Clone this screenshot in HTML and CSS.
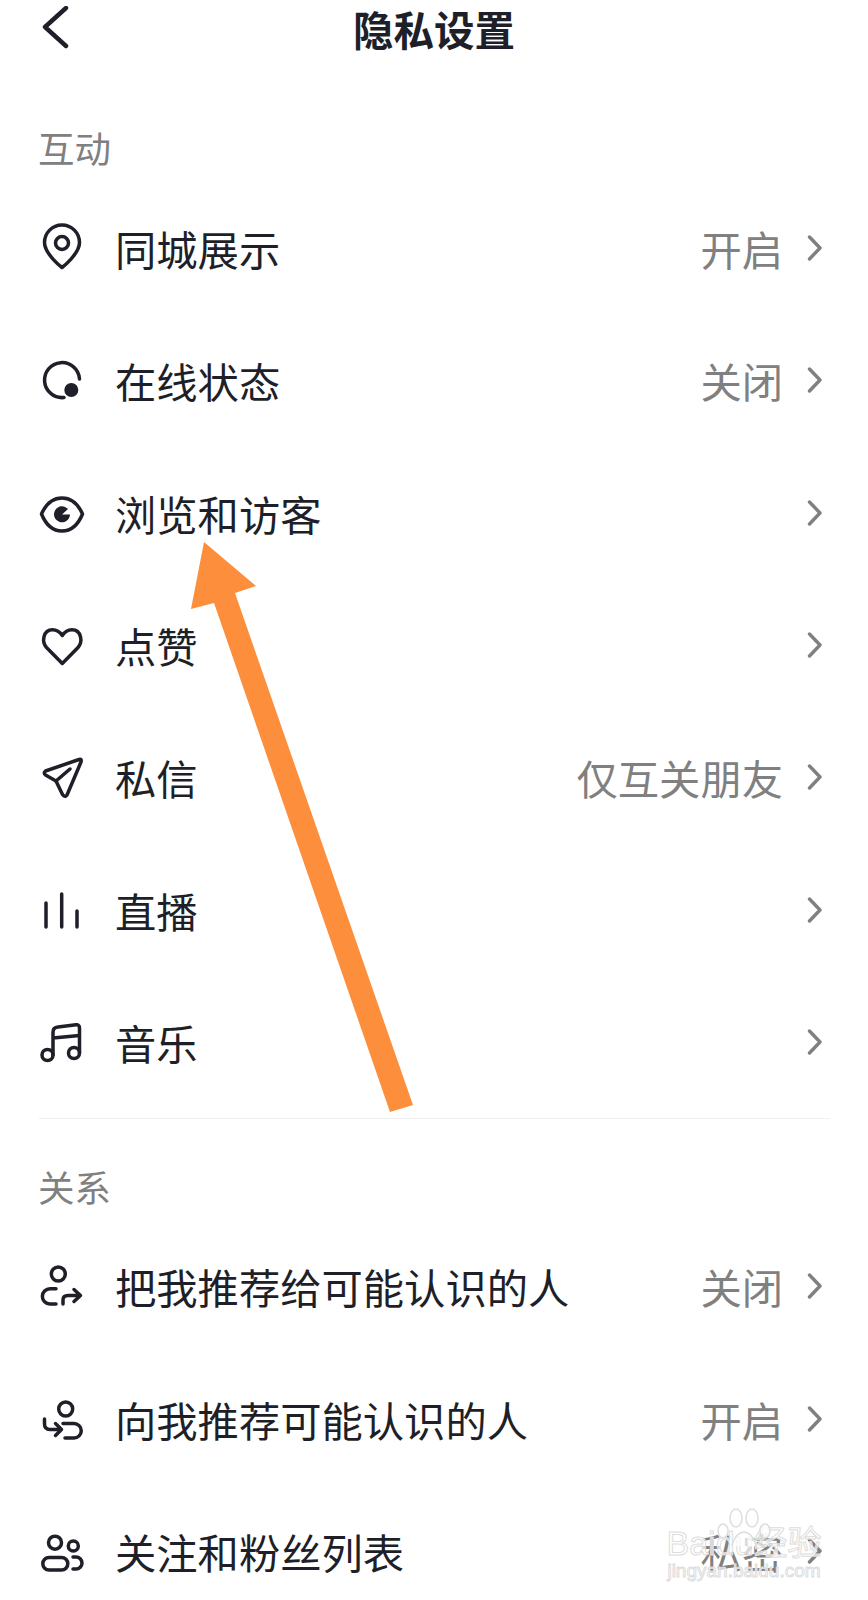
FILE: index.html
```html
<!DOCTYPE html>
<html lang="zh-CN">

<head>
    <meta charset="UTF-8">
    <meta name="viewport" content="width=device-width, initial-scale=1.0">
    <title>隐私设置</title>
    <link rel="stylesheet" href="styles.css">
</head>

<body>
    <div class="page">
        <header class="topbar">
            <svg class="back" viewBox="0 0 28 44"><path d="M25 2 L4 21 L25 40" /></svg>
            <h1>隐私设置</h1>
        </header>

        <section class="group">
            <h2>互动</h2>
            <div class="row">
                <svg class="icon" viewBox="0 0 48 48"><path d="M24 44.5C24 44.5 6.5 31 6.5 19.5a17.5 17.5 0 0 1 35 0C41.5 31 24 44.5 24 44.5Z" /><circle cx="24" cy="20" r="6.5" /></svg>
                <span class="name">同城展示</span>
                <span class="value">开启</span>
                <svg class="more" viewBox="0 0 16 26"><path d="M3.5 2 L14 13 L3.5 24" /></svg>
            </div>
            <div class="row">
                <svg class="icon" viewBox="0 0 48 48"><path d="M41.5 24A17.5 17.5 0 1 0 26 42.5" /><circle class="solid" cx="33.3" cy="35" r="7" /></svg>
                <span class="name">在线状态</span>
                <span class="value">关闭</span>
                <svg class="more" viewBox="0 0 16 26"><path d="M3.5 2 L14 13 L3.5 24" /></svg>
            </div>
            <div class="row">
                <svg class="icon" viewBox="0 0 48 48"><path d="M3.5 26C8 16 15 10 24 10S40 16 44.5 26C40 37 33 43 24 43S8 37 3.5 26Z" /><path class="solid" d="M24 26.5L30 21A8 8 0 1 0 32 26.5Z" /></svg>
                <span class="name">浏览和访客</span>
                <svg class="more" viewBox="0 0 16 26"><path d="M3.5 2 L14 13 L3.5 24" /></svg>
            </div>
            <div class="row">
                <svg class="icon" viewBox="0 0 48 48"><path d="M24.3 43.5L8.5 27.5C3.5 22 5 9.7 14.5 9.7C19 9.7 22 12 24.3 15.5C26.5 12 29.5 9.7 34 9.7C43.5 9.7 45 22 40 27.5Z" /></svg>
                <span class="name">点赞</span>
                <svg class="more" viewBox="0 0 16 26"><path d="M3.5 2 L14 13 L3.5 24" /></svg>
            </div>
            <div class="row">
                <svg class="icon" viewBox="0 0 48 48"><path d="M41 7.5L7.5 19Q5 21 7.5 23L18 29L24.5 42.5Q27 46 29 43L43 10Q44 6.5 41 7.5Z" /><path d="M18 29L32 17" /></svg>
                <span class="name">私信</span>
                <span class="value">仅互关朋友</span>
                <svg class="more" viewBox="0 0 16 26"><path d="M3.5 2 L14 13 L3.5 24" /></svg>
            </div>
            <div class="row">
                <svg class="icon" viewBox="0 0 48 48"><path d="M8 18V42M23.7 9V42M39 26V42" /></svg>
                <span class="name">直播</span>
                <svg class="more" viewBox="0 0 16 26"><path d="M3.5 2 L14 13 L3.5 24" /></svg>
            </div>
            <div class="row">
                <svg class="icon" viewBox="0 0 48 48"><path d="M15 38V15Q15 10.5 20 10L38 7.8Q41.5 7.5 41.5 11V36M15 21L41.5 18.5" /><circle cx="9.5" cy="38" r="5.5" /><circle cx="36" cy="36" r="5.5" /></svg>
                <span class="name">音乐</span>
                <svg class="more" viewBox="0 0 16 26"><path d="M3.5 2 L14 13 L3.5 24" /></svg>
            </div>
        </section>

        <div class="divider"></div>

        <section class="group">
            <h2>关系</h2>
            <div class="row">
                <svg class="icon" viewBox="0 0 48 48"><circle cx="20.3" cy="13" r="7" /><path d="M18 27.7H12A7.6 7.6 0 0 0 12 43H18M25 43V39Q25 34.5 30 34.5H42M36 28.5L42.5 34.5L36 40.5" /></svg>
                <span class="name">把我推荐给可能认识的人</span>
                <span class="value">关闭</span>
                <svg class="more" viewBox="0 0 16 26"><path d="M3.5 2 L14 13 L3.5 24" /></svg>
            </div>
            <div class="row">
                <svg class="icon" viewBox="0 0 48 48"><circle cx="27.7" cy="15" r="7" /><path d="M25 29.5H36A7.2 7.2 0 0 1 36 44H27M6.5 25V30Q6.5 35.5 12 35.5H23M17.5 29.5L23.5 35.5L17.5 41.5" /></svg>
                <span class="name">向我推荐可能认识的人</span>
                <span class="value">开启</span>
                <svg class="more" viewBox="0 0 16 26"><path d="M3.5 2 L14 13 L3.5 24" /></svg>
            </div>
            <div class="row">
                <svg class="icon" viewBox="0 0 48 48"><circle cx="17" cy="16.7" r="6.5" /><rect x="4.8" y="31.5" width="25" height="12.5" rx="6.25" /><circle cx="35.3" cy="20" r="5" /><path d="M35 31H38A6 6 0 0 1 38 43H35" /></svg>
                <span class="name">关注和粉丝列表</span>
                <span class="value">私密</span>
                <svg class="more" viewBox="0 0 16 26"><path d="M3.5 2 L14 13 L3.5 24" /></svg>
            </div>
        </section>

        <!-- hand drawn arrow on top of the screenshot -->
        <svg class="arrow" viewBox="0 0 868 1600"><polygon points="204,542 256,586 235,593 413,1105 390,1112 214,603 191,609" /></svg>

        <div class="watermark">
            <svg class="paw" viewBox="0 0 60 40">
                <ellipse cx="9" cy="23" rx="5" ry="7" />
                <ellipse cx="22" cy="10" rx="6" ry="9" />
                <ellipse cx="38" cy="10" rx="6" ry="9" />
                <ellipse cx="51" cy="23" rx="5" ry="7" />
                <path d="M18 38C20 28 26 24 30 24C34 24 40 28 42 38" />
            </svg>
            <div class="mark-main">Baidu经验</div>
            <div class="mark-url">jingyan.baidu.com</div>
        </div>
    </div>
</body>

</html>
```

FILE: styles.css
```css
* {
    box-sizing: border-box;
}

html, body {
    margin: 0;
    background: #fff;
}

body {
    font-family: "Noto Sans CJK SC", "Noto Sans", sans-serif;
    color: #1e1f28;
}

.page {
    position: relative;
    width: 868px;
    height: 1600px;
    overflow: hidden;
}

.topbar {
    position: relative;
    height: 62px;
    display: flex;
    justify-content: center;
}

.topbar h1 {
    margin: 0;
    font-size: 40.5px;
    font-weight: 700;
    line-height: 58px;
}

.back {
    position: absolute;
    left: 41px;
    top: 6px;
    width: 28px;
    height: 44px;
    fill: none;
    stroke: #1e1f28;
    stroke-width: 4.4;
    stroke-linecap: round;
    stroke-linejoin: round;
}

.group h2 {
    margin: 0;
    padding: 64px 0 0 38px;
    height: 122px;
    font-size: 36.5px;
    font-weight: 400;
    line-height: 44px;
    color: #808080;
}

.divider + .group h2 {
    padding-top: 46px;
    height: 103px;
}

.row {
    height: 132.3px;
    padding: 0 46px 0 38px;
    display: flex;
    align-items: center;
}

.icon {
    width: 48px;
    height: 48px;
    margin: -6px 29px 0 0;
    flex: none;
    fill: none;
    stroke: #1e1f28;
    stroke-width: 3.5;
    stroke-linecap: round;
    stroke-linejoin: round;
}

.icon .solid {
    fill: #1e1f28;
    stroke: none;
}

.name {
    flex: 1;
    font-size: 41.3px;
    line-height: 56px;
    margin-bottom: 4px;
}

.value {
    font-size: 41.3px;
    line-height: 56px;
    color: #808080;
    margin: 0 23px 4px 0;
}

.more {
    width: 16px;
    height: 26px;
    margin-top: -4px;
    flex: none;
    fill: none;
    stroke: #808080;
    stroke-width: 3.4;
    stroke-linecap: round;
    stroke-linejoin: round;
}

.divider {
    height: 1px;
    margin: 8px 38px 0 39px;
    background: #efefef;
}

.arrow {
    position: absolute;
    left: 0;
    top: 0;
    width: 868px;
    height: 1600px;
    fill: #fd8f3c;
}

.watermark {
    position: absolute;
    left: 664px;
    top: 1508px;
    width: 160px;
    text-align: center;
    color: rgba(255, 255, 255, 0.7);
    font-family: "Liberation Sans", "Noto Sans CJK SC", sans-serif;
    -webkit-text-stroke: 1px #dddddd;
}

.paw {
    position: absolute;
    left: 50px;
    top: 0;
    width: 60px;
    height: 40px;
    fill: rgba(255, 255, 255, 0.7);
    stroke: #dddddd;
    stroke-width: 1.5;
}

.mark-main {
    margin-top: 17px;
    font-size: 34px;
    line-height: 36px;
    white-space: nowrap;
}

.mark-url {
    font-size: 19px;
    line-height: 20px;
    white-space: nowrap;
}
```
